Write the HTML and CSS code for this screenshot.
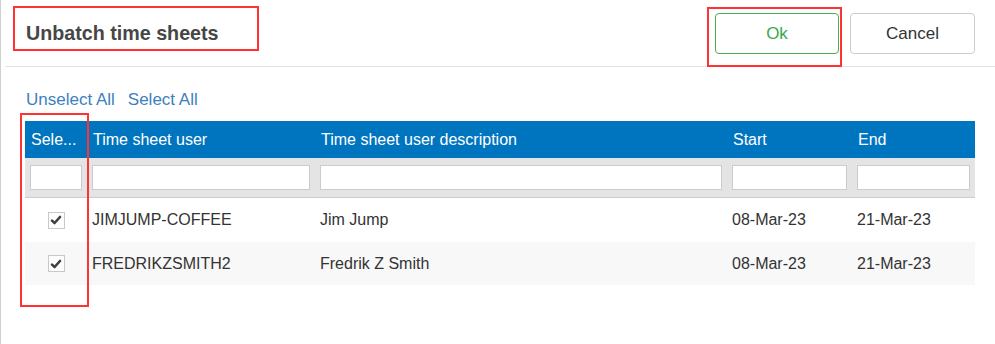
FILE: index.html
```html
<!DOCTYPE html>
<html lang="en">
<head>
    <meta charset="UTF-8">
    <meta name="viewport" content="width=device-width, initial-scale=1.0">
    <title>Unbatch time sheets</title>
    <link rel="stylesheet" href="styles.css">
</head>
<body>
    <div class="dialog">
        <div class="dialog-header">
            <h1 class="dialog-title">Unbatch time sheets</h1>
            <div class="dialog-actions">
                <button class="btn btn-ok">Ok</button>
                <button class="btn btn-cancel">Cancel</button>
            </div>
        </div>

        <div class="dialog-body">
            <div class="select-links">
                <a href="#">Unselect All</a>
                <a href="#">Select All</a>
            </div>

            <table class="grid">
                <colgroup>
                    <col class="col-select">
                    <col class="col-user">
                    <col class="col-desc">
                    <col class="col-start">
                    <col class="col-end">
                </colgroup>
                <thead>
                    <tr class="grid-head">
                        <th title="Select">Sele...</th>
                        <th>Time sheet user</th>
                        <th>Time sheet user description</th>
                        <th>Start</th>
                        <th>End</th>
                    </tr>
                    <tr class="grid-filter">
                        <td><input type="text"></td>
                        <td><input type="text"></td>
                        <td><input type="text"></td>
                        <td><input type="text"></td>
                        <td><input type="text"></td>
                    </tr>
                </thead>
                <tbody>
                    <tr>
                        <td class="cell-check"><span class="check"><svg width="12" height="12" viewBox="0 0 12 12"><path d="M2 6.6 L4.6 9 L10 3" fill="none" stroke="#3f3f3f" stroke-width="2.6" stroke-linecap="round" stroke-linejoin="round"/></svg></span></td>
                        <td>JIMJUMP-COFFEE</td>
                        <td>Jim Jump</td>
                        <td>08-Mar-23</td>
                        <td>21-Mar-23</td>
                    </tr>
                    <tr>
                        <td class="cell-check"><span class="check"><svg width="12" height="12" viewBox="0 0 12 12"><path d="M2 6.6 L4.6 9 L10 3" fill="none" stroke="#3f3f3f" stroke-width="2.6" stroke-linecap="round" stroke-linejoin="round"/></svg></span></td>
                        <td>FREDRIKZSMITH2</td>
                        <td>Fredrik Z Smith</td>
                        <td>08-Mar-23</td>
                        <td>21-Mar-23</td>
                    </tr>
                </tbody>
            </table>
        </div>

        <!-- review markers -->
        <div class="marker marker-title"></div>
        <div class="marker marker-ok"></div>
        <div class="marker marker-select"></div>
    </div>
</body>
</html>
```

FILE: styles.css
```css
body {
    margin: 0;
    font-family: 'Liberation Sans', Arial, sans-serif;
    color: #333;
    background-color: #fff;
}
.dialog {
    position: relative;
    min-height: 344px;
    border-left: 1px solid #cfcfcf;
    box-sizing: border-box;
}
.dialog-header {
    display: flex;
    align-items: center;
    justify-content: space-between;
    height: 66px;
    margin-left: 4px;
    padding: 0 20px 0 21px;
    border-bottom: 1px solid #e3e3e3;
}
.dialog-title {
    margin: 0;
    font-size: 19.7px;
    font-weight: bold;
    color: #464646;
}
.dialog-actions {
    display: flex;
    gap: 11px;
    padding-top: 1px;
}
.btn {
    height: 41px;
    border-radius: 4px;
    background-color: #fff;
    font-family: 'Liberation Sans', Arial, sans-serif;
    font-size: 17px;
    cursor: pointer;
}
.btn-ok {
    width: 124px;
    border: 1px solid #4cae4c;
    color: #3aa94a;
}
.btn-cancel {
    width: 125px;
    border: 1px solid #cccccc;
    color: #333;
}
.dialog-body {
    padding: 23px 20px 0 24px;
}
.select-links {
    display: flex;
    gap: 13px;
    line-height: 20px;
    margin-bottom: 11px;
    padding-left: 1px;
}
.select-links a {
    font-size: 17px;
    color: #3d7fc0;
    text-decoration: none;
}
.grid {
    width: 950px;
    border-collapse: collapse;
    table-layout: fixed;
}
.col-select { width: 62px; }
.col-user { width: 228px; }
.col-desc { width: 412px; }
.col-start { width: 125px; }
.col-end { width: 123px; }
.grid-head th {
    height: 37px;
    padding: 0 5px 0 6px;
    background-color: #0075bf;
    color: #fff;
    font-size: 16px;
    font-weight: normal;
    text-align: left;
    white-space: nowrap;
    overflow: hidden;
}
.grid-filter td {
    height: 39px;
    padding: 0 5px;
    background-color: #e4e4e4;
    border-bottom: 1px solid #cccccc;
    box-sizing: border-box;
}
.grid-filter input {
    display: block;
    width: 100%;
    height: 25px;
    box-sizing: border-box;
    border: 1px solid #cccccc;
    background-color: #fff;
}
.grid tbody td {
    height: 43px;
    padding: 1px 5px 0;
    font-size: 16px;
    color: #333;
    white-space: nowrap;
}
.grid tbody tr:nth-child(2) td {
    height: 42px;
    background-color: #f8f8f8;
}
.grid tbody td.cell-check {
    text-align: center;
    padding: 0;
}
.check {
    display: inline-flex;
    align-items: center;
    justify-content: center;
    width: 17px;
    height: 17px;
    box-sizing: border-box;
    border: 1px solid #c8c8c8;
    background-color: #fdfdfd;
    vertical-align: middle;
}
.marker {
    position: absolute;
    border: 2px solid #ff3333;
    box-sizing: border-box;
}
.marker-title {
    left: 12px;
    top: 6px;
    width: 246px;
    height: 45px;
}
.marker-ok {
    left: 706px;
    top: 7px;
    width: 135px;
    height: 60px;
}
.marker-select {
    left: 19px;
    top: 113px;
    width: 69px;
    height: 194px;
}
```
